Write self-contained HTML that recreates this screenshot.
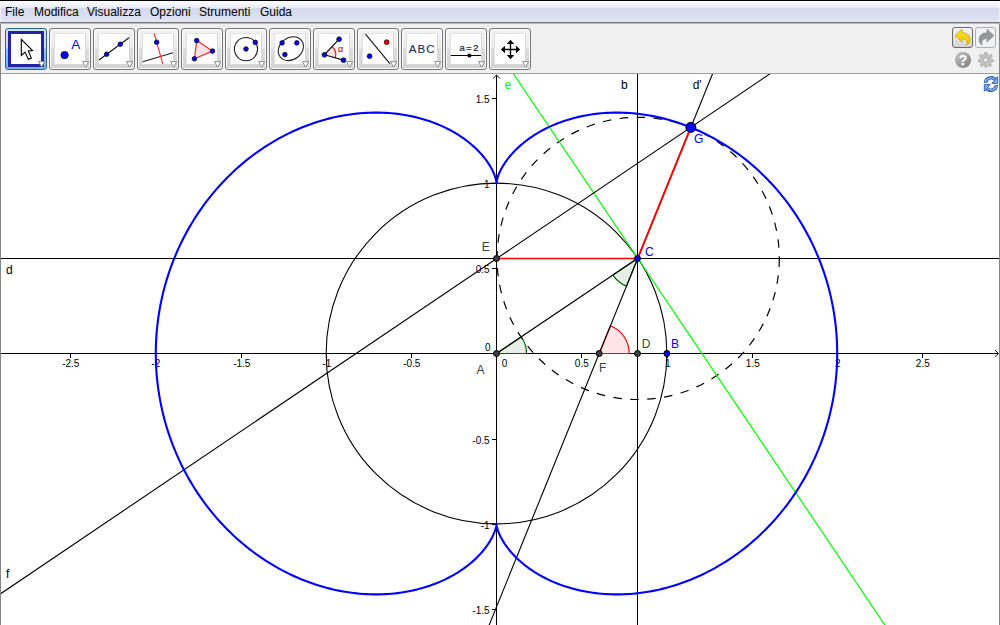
<!DOCTYPE html>
<html><head><meta charset="utf-8"><title>GeoGebra</title>
<style>
html,body{margin:0;padding:0;}
body{width:1000px;height:625px;overflow:hidden;background:#fff;position:relative;font-family:"Liberation Sans",sans-serif;}
#top{position:absolute;left:0;top:0;width:1000px;height:1px;background:#000;}
#menu{position:absolute;left:0;top:1px;width:1000px;height:21px;box-shadow:inset 1px 0 0 rgba(255,255,255,0.5),inset -1px 0 0 rgba(255,255,255,0.5);background:linear-gradient(#fdfdff 0px,#f1f3fb 4px,#e9ecf8 6.5px,#d5daee 7px,#d9ddf0 13px,#e1e5f5 20px);font-size:12px;color:#000;}
#menu span{position:absolute;top:4px;line-height:14px;}
#sep{position:absolute;left:0;top:22px;width:1000px;height:1px;background:#7c7c7c;box-shadow:0 1px 0 #b8b8b8;z-index:2;}
#tb{position:absolute;left:0;top:23px;width:1000px;height:50px;background:#f0f0f0;}
#tbb{position:absolute;left:0;top:73px;width:1000px;height:1px;background:#a0a0a0;}
#lb{position:absolute;left:0;top:22px;width:1px;height:603px;background:#868686;}
#rb{position:absolute;left:999px;top:22px;width:1px;height:603px;background:#868686;}
.btn{position:absolute;top:5px;width:40px;height:40px;border:1px solid #787878;border-radius:3px;background:linear-gradient(#f4f4f4 0,#ececec 19px,#dcdcdc 20px,#d2d2d2 40px);box-shadow:inset 0 0 0 1px #fafafa;}
.btn.sel{border-color:#2c628b;background:linear-gradient(#d3e3f0 0,#c6dcec 19px,#8ac8ea 20px,#6ab9e4 40px);box-shadow:none;}
.ic{position:absolute;left:4px;top:4px;width:30px;height:30px;background:#fff;border:1px solid #d6d6d6;border-top-color:#e2e2e2;border-left-color:#e0e0e0;}
.ic svg{display:block;margin:-1px 0 0 -1px;}
.sel .ic{left:2px;top:2px;width:30px;height:30px;border:3px solid #2222aa;}
.sel .ic svg{margin:-1px 0 0 -1px;}
.tri{position:absolute;left:32px;top:32px;}
#graph{position:absolute;left:0;top:0;}
</style></head><body>
<div id="top"></div>
<div id="menu"><span style="left:5px">File</span><span style="left:34px">Modifica</span><span style="left:87px">Visualizza</span><span style="left:150px">Opzioni</span><span style="left:199px">Strumenti</span><span style="left:260px">Guida</span></div>
<div id="sep"></div>
<div id="tb">
<div class="btn sel" style="left:5px"><div class="ic"><svg width="32" height="32" viewBox="0 0 32 32"><path d="M11.3 6.4 L11.3 22.5 L15 19.1 L18.3 26.2 L21.3 25.1 L18.3 18 L22.5 17.5 Z" fill="#fff" stroke="#000" stroke-width="1.1" stroke-linejoin="miter"/></svg></div><svg class="tri" width="8" height="7" viewBox="0 0 8 7"><path d="M0.4 0.6 L6.8 0.6 L3.6 6 Z" fill="#fff" stroke="#848484" stroke-width="0.9"/></svg></div>
<div class="btn" style="left:49px"><div class="ic"><svg width="32" height="32" viewBox="0 0 32 32"><circle cx="10.6" cy="22.1" r="3.7" fill="#0000ff" stroke="#101010" stroke-width="0.8"/><text x="17.3" y="16.4" font-size="13.5px" fill="#0000ff" font-family="Liberation Sans, sans-serif">A</text></svg></div><svg class="tri" width="8" height="7" viewBox="0 0 8 7"><path d="M0.4 0.6 L6.8 0.6 L3.6 6 Z" fill="#fff" stroke="#848484" stroke-width="0.9"/></svg></div>
<div class="btn" style="left:93px"><div class="ic"><svg width="32" height="32" viewBox="0 0 32 32"><line x1="1" y1="27" x2="31" y2="4.8" stroke="#101010" stroke-width="1.1"/><circle cx="8.7" cy="21.2" r="2.3" fill="#0000ff" stroke="#101010" stroke-width="0.8"/><circle cx="22.3" cy="11.2" r="2.3" fill="#0000ff" stroke="#101010" stroke-width="0.8"/></svg></div><svg class="tri" width="8" height="7" viewBox="0 0 8 7"><path d="M0.4 0.6 L6.8 0.6 L3.6 6 Z" fill="#fff" stroke="#848484" stroke-width="0.9"/></svg></div>
<div class="btn" style="left:137px"><div class="ic"><svg width="32" height="32" viewBox="0 0 32 32"><line x1="0.8" y1="28.8" x2="31" y2="19.7" stroke="#202020" stroke-width="1.1"/><line x1="12.2" y1="0.5" x2="20.8" y2="31" stroke="#ff3030" stroke-width="1.1"/><circle cx="14.7" cy="9.2" r="2.3" fill="#0000ff" stroke="#101010" stroke-width="0.8"/></svg></div><svg class="tri" width="8" height="7" viewBox="0 0 8 7"><path d="M0.4 0.6 L6.8 0.6 L3.6 6 Z" fill="#fff" stroke="#848484" stroke-width="0.9"/></svg></div>
<div class="btn" style="left:181px"><div class="ic"><svg width="32" height="32" viewBox="0 0 32 32"><path d="M10.7 7.6 L26.5 18.1 L8.4 25.8 Z" fill="#fbe1e1" stroke="#e03535" stroke-width="1.2" stroke-linejoin="round"/><circle cx="10.7" cy="7.6" r="2.3" fill="#0000ff" stroke="#101010" stroke-width="0.8"/><circle cx="26.5" cy="18.1" r="2.3" fill="#0000ff" stroke="#101010" stroke-width="0.8"/><circle cx="8.4" cy="25.8" r="2.3" fill="#0000ff" stroke="#101010" stroke-width="0.8"/></svg></div><svg class="tri" width="8" height="7" viewBox="0 0 8 7"><path d="M0.4 0.6 L6.8 0.6 L3.6 6 Z" fill="#fff" stroke="#848484" stroke-width="0.9"/></svg></div>
<div class="btn" style="left:225px"><div class="ic"><svg width="32" height="32" viewBox="0 0 32 32"><circle cx="16" cy="16.1" r="11.6" fill="none" stroke="#202020" stroke-width="1.1"/><circle cx="16" cy="16" r="2.3" fill="#0000ff" stroke="#101010" stroke-width="0.8"/><circle cx="25.3" cy="9.4" r="2.3" fill="#0000ff" stroke="#101010" stroke-width="0.8"/></svg></div><svg class="tri" width="8" height="7" viewBox="0 0 8 7"><path d="M0.4 0.6 L6.8 0.6 L3.6 6 Z" fill="#fff" stroke="#848484" stroke-width="0.9"/></svg></div>
<div class="btn" style="left:269px"><div class="ic"><svg width="32" height="32" viewBox="0 0 32 32"><ellipse cx="16.9" cy="15.8" rx="13.5" ry="10.9" transform="rotate(-38 16.7 15.8)" fill="none" stroke="#202020" stroke-width="1.1"/><circle cx="8.1" cy="9.9" r="2.3" fill="#0000ff" stroke="#101010" stroke-width="0.8"/><circle cx="22.8" cy="9.9" r="2.3" fill="#0000ff" stroke="#101010" stroke-width="0.8"/><circle cx="10.9" cy="21.6" r="2.3" fill="#0000ff" stroke="#101010" stroke-width="0.8"/></svg></div><svg class="tri" width="8" height="7" viewBox="0 0 8 7"><path d="M0.4 0.6 L6.8 0.6 L3.6 6 Z" fill="#fff" stroke="#848484" stroke-width="0.9"/></svg></div>
<div class="btn" style="left:313px"><div class="ic"><svg width="32" height="32" viewBox="0 0 32 32"><path d="M6.4 21.8 L14.2 13.5 A11.3 11.3 0 0 1 17.2 24.9 Z" fill="#fbe1e1" stroke="none"/><path d="M14.2 13.5 A11.3 11.3 0 0 1 17.2 24.9" fill="none" stroke="#e02020" stroke-width="1.2"/><path d="M21.1 6.2 L6.4 21.8 L25.5 27.2" fill="none" stroke="#101010" stroke-width="1.2"/><circle cx="6.4" cy="21.8" r="2.4" fill="#0000ff" stroke="#101010" stroke-width="0.8"/><circle cx="21.1" cy="6.2" r="2.4" fill="#0000ff" stroke="#101010" stroke-width="0.8"/><circle cx="25.5" cy="27.2" r="2.4" fill="#0000ff" stroke="#101010" stroke-width="0.8"/><text x="20" y="19.4" font-size="9px" fill="#e02020" stroke="#e02020" stroke-width="0.2" font-family="Liberation Sans, sans-serif">α</text></svg></div><svg class="tri" width="8" height="7" viewBox="0 0 8 7"><path d="M0.4 0.6 L6.8 0.6 L3.6 6 Z" fill="#fff" stroke="#848484" stroke-width="0.9"/></svg></div>
<div class="btn" style="left:357px"><div class="ic"><svg width="32" height="32" viewBox="0 0 32 32"><line x1="3.5" y1="1.1" x2="27.9" y2="30.7" stroke="#202020" stroke-width="1.2"/><circle cx="24.7" cy="9.2" r="2.4" fill="#ff0000" stroke="#101010" stroke-width="0.8"/><circle cx="7.6" cy="23.2" r="2.4" fill="#0000ff" stroke="#101010" stroke-width="0.8"/></svg></div><svg class="tri" width="8" height="7" viewBox="0 0 8 7"><path d="M0.4 0.6 L6.8 0.6 L3.6 6 Z" fill="#fff" stroke="#848484" stroke-width="0.9"/></svg></div>
<div class="btn" style="left:401px"><div class="ic"><svg width="32" height="32" viewBox="0 0 32 32"><text x="2.8" y="20" font-size="11.5px" letter-spacing="1.1" fill="#1c3564" stroke="#1c3564" stroke-width="0.15" font-family="Liberation Sans, sans-serif">ABC</text></svg></div><svg class="tri" width="8" height="7" viewBox="0 0 8 7"><path d="M0.4 0.6 L6.8 0.6 L3.6 6 Z" fill="#fff" stroke="#848484" stroke-width="0.9"/></svg></div>
<div class="btn" style="left:445px"><div class="ic"><svg width="32" height="32" viewBox="0 0 32 32"><text y="18.1" font-size="9.5px" fill="#1a1a40" stroke="#1a1a40" stroke-width="0.2" font-family="Liberation Sans, sans-serif"><tspan x="9.5">a</tspan><tspan x="16">=</tspan><tspan x="23.3">2</tspan></text><line x1="0.7" y1="22.5" x2="31" y2="22.5" stroke="#000" stroke-width="1"/><circle cx="19.4" cy="22.5" r="2.1" fill="#000"/></svg></div><svg class="tri" width="8" height="7" viewBox="0 0 8 7"><path d="M0.4 0.6 L6.8 0.6 L3.6 6 Z" fill="#fff" stroke="#848484" stroke-width="0.9"/></svg></div>
<div class="btn" style="left:489px"><div class="ic"><svg width="32" height="32" viewBox="0 0 32 32"><path d="M16.5 9 V24 M9 16.5 H24" stroke="#000" stroke-width="1.4" fill="none"/><path d="M16.5 6.8 L20.2 11 H12.8 Z M16.5 26.2 L20.2 22 H12.8 Z M6.8 16.5 L11 12.8 V20.2 Z M26.2 16.5 L22 12.8 V20.2 Z" fill="#000"/></svg></div><svg class="tri" width="8" height="7" viewBox="0 0 8 7"><path d="M0.4 0.6 L6.8 0.6 L3.6 6 Z" fill="#fff" stroke="#848484" stroke-width="0.9"/></svg></div>
<svg style="position:absolute;left:940px;top:0" width="60" height="50" viewBox="940 23 60 50" font-family="Liberation Sans, sans-serif">
<defs>
<linearGradient id="gb" x1="0" y1="0" x2="0" y2="1"><stop offset="0" stop-color="#f4f4f4"/><stop offset="1" stop-color="#d4d4d4"/></linearGradient>
<linearGradient id="gh" x1="0" y1="0" x2="1" y2="1"><stop offset="0" stop-color="#c4c4c4"/><stop offset="1" stop-color="#7c7c7c"/></linearGradient>
<linearGradient id="gy" x1="0" y1="0" x2="0" y2="1"><stop offset="0" stop-color="#ffe630"/><stop offset="1" stop-color="#e8c000"/></linearGradient>
</defs>
<rect x="952.5" y="27.5" width="20" height="20" rx="2.5" fill="url(#gb)" stroke="#6c6c6c"/>
<rect x="975.5" y="27.5" width="20" height="20" rx="2.5" fill="#f2f2f2" stroke="#a9b1b8"/>
<path d="M955 35.6 L962 29.2 L962 32.8 C967.6 32.8 970.4 36.2 969.9 40.4 C969.6 43.2 968.2 44.8 966.5 44.7 C967.7 42.4 967.2 38.8 962 38.6 L962 42.2 Z" fill="url(#gy)" stroke="#c9a400" stroke-width="0.8" stroke-linejoin="round"/>
<path d="M994 35.6 L987 29.2 L987 32.8 C981.4 32.8 978.6 36.2 979.1 40.4 C979.4 43.2 980.8 44.8 982.5 44.7 C981.3 42.4 981.8 38.8 987 38.6 L987 42.2 Z" fill="#979797" stroke="#8c8c8c" stroke-width="0.6" stroke-linejoin="round"/>
<circle cx="963" cy="60" r="8" fill="url(#gh)"/>
<text x="963" y="65.2" font-size="14px" font-weight="bold" fill="#fff" stroke="#fff" stroke-width="0.3" text-anchor="middle">?</text>
<g transform="translate(985.8 60) scale(0.93)" fill="#bcbcbc" stroke="#a2a2a2" stroke-width="0.5">
<path d="M-1.5 -8 H1.5 L2 -5.6 L3.6 -4.9 L5.7 -6.3 L7.4 -4.2 L5.6 -2.4 L6 -0.9 L8 -0.2 V1.8 L5.9 2.4 L5.2 3.9 L6.3 5.8 L4.4 7.3 L2.6 5.8 L1.2 6.2 L0.8 8 H-0.8 L-1.2 6.2 L-2.6 5.8 L-4.4 7.3 L-6.3 5.8 L-5.2 3.9 L-5.9 2.4 L-8 1.8 V-0.2 L-6 -0.9 L-5.6 -2.4 L-7.4 -4.2 L-5.7 -6.3 L-3.6 -4.9 L-2 -5.6 Z"/>
<circle r="4.6" fill="none" stroke="#c8c8c8" stroke-width="1.2"/><circle r="2.5" fill="#f0f0f0" stroke="#969696" stroke-width="0.7"/>
</g>
</svg>
</div>
<div id="tbb"></div>
<svg id="graph" width="1000" height="625" viewBox="0 0 1000 625" font-family="Liberation Sans, sans-serif">
<defs><clipPath id="cp"><rect x="1" y="74" width="998" height="551"/></clipPath></defs>
<g clip-path="url(#cp)">
<g stroke="#000" stroke-width="1" fill="none" shape-rendering="crispEdges">
<line x1="1" y1="353.5" x2="998" y2="353.5"/>
<line x1="496.5" y1="75" x2="496.5" y2="625"/>
<line x1="70.5" y1="353.5" x2="70.5" y2="358.0"/>
<line x1="155.5" y1="353.5" x2="155.5" y2="358.0"/>
<line x1="241.5" y1="353.5" x2="241.5" y2="358.0"/>
<line x1="326.5" y1="353.5" x2="326.5" y2="358.0"/>
<line x1="411.5" y1="353.5" x2="411.5" y2="358.0"/>
<line x1="581.5" y1="353.5" x2="581.5" y2="358.0"/>
<line x1="667.5" y1="353.5" x2="667.5" y2="358.0"/>
<line x1="752.5" y1="353.5" x2="752.5" y2="358.0"/>
<line x1="837.5" y1="353.5" x2="837.5" y2="358.0"/>
<line x1="922.5" y1="353.5" x2="922.5" y2="358.0"/>
<line x1="492.0" y1="609.5" x2="496.5" y2="609.5"/>
<line x1="492.0" y1="524.5" x2="496.5" y2="524.5"/>
<line x1="492.0" y1="439.5" x2="496.5" y2="439.5"/>
<line x1="492.0" y1="268.5" x2="496.5" y2="268.5"/>
<line x1="492.0" y1="183.5" x2="496.5" y2="183.5"/>
<line x1="492.0" y1="98.5" x2="496.5" y2="98.5"/>
</g>
<path d="M995 350.2 L998.4 353.5 L995 356.8" fill="none" stroke="#000" stroke-width="1"/>
<path d="M493.2 78.4 L496.5 75.1 L499.8 78.4" fill="none" stroke="#000" stroke-width="1"/>
<g font-size="10px" fill="#000" text-anchor="middle">
<text x="70.8" y="367">-2.5</text>
<text x="155.8" y="367">-2</text>
<text x="241.8" y="367">-1.5</text>
<text x="326.8" y="367">-1</text>
<text x="411.8" y="367">-0.5</text>
<text x="581.8" y="367">0.5</text>
<text x="667.8" y="367">1</text>
<text x="752.8" y="367">1.5</text>
<text x="837.8" y="367">2</text>
<text x="922.8" y="367">2.5</text>
</g>
<g font-size="10px" fill="#000" text-anchor="end">
<text x="489.6" y="613.5">-1.5</text>
<text x="489.6" y="528.5">-1</text>
<text x="489.6" y="443.5">-0.5</text>
<text x="489.6" y="272.5">0.5</text>
<text x="489.6" y="187.5">1</text>
<text x="489.6" y="102.5">1.5</text>
<text x="490.5" y="351">0</text>
</g>
<text x="501.7" y="367.3" font-size="10px">0</text>
<path d="M496.5 353.5 L526.5 353.5 A30 30 0 0 0 521.38 336.74 Z" fill="rgba(0,100,0,0.1)" stroke="#006400" stroke-width="1.2" stroke-linejoin="round"/>
<path d="M637.78 258.31 L612.9 275.08 A30 30 0 0 0 626.51 286.12 Z" fill="rgba(0,100,0,0.1)" stroke="#006400" stroke-width="1.2" stroke-linejoin="round"/>
<path d="M599.2 353.5 L629.2 353.5 A30 30 0 0 0 610.47 325.7 Z" fill="rgba(255,0,0,0.1)" stroke="#ff0000" stroke-width="1.2" stroke-linejoin="round"/>
<circle cx="496.5" cy="353.5" r="170.35" fill="none" stroke="#000" stroke-width="1.08"/>
<circle cx="638.2" cy="258.4" r="141.1" fill="none" stroke="#000" stroke-width="1.2" stroke-dasharray="8.5 8.5"/>
<line x1="-862.5" y1="258.5" x2="2137.5" y2="258.5" stroke="#000" stroke-width="1"/>
<line x1="637.5" y1="-1241.5" x2="637.5" y2="1758.5" stroke="#000" stroke-width="1"/>
<line x1="-200.37" y1="-985.67" x2="1475.92" y2="1502.3" stroke="#00ff00" stroke-width="1.2"/>
<line x1="74.43" y1="1648.51" x2="1201.12" y2="-1131.88" stroke="#000" stroke-width="1.12"/>
<line x1="-746.31" y1="1098.49" x2="1739.31" y2="-581.29" stroke="#000" stroke-width="1.12"/>
<line x1="496.5" y1="353.5" x2="637.78" y2="258.31" stroke="#000" stroke-width="1.12"/>
<path d="M837.2 353.5 L837.16 349.04 L837.04 344.58 L836.85 340.13 L836.58 335.68 L836.23 331.24 L835.8 326.8 L835.3 322.38 L834.72 317.97 L834.06 313.57 L833.33 309.18 L832.52 304.82 L831.63 300.47 L830.67 296.14 L829.64 291.84 L828.53 287.55 L827.35 283.29 L826.1 279.06 L824.77 274.86 L823.37 270.68 L821.91 266.54 L820.37 262.43 L818.76 258.35 L817.09 254.31 L815.35 250.31 L813.54 246.34 L811.67 242.42 L809.73 238.53 L807.73 234.69 L805.67 230.89 L803.55 227.14 L801.36 223.43 L799.12 219.77 L796.82 216.16 L794.46 212.6 L792.05 209.09 L789.58 205.63 L787.06 202.23 L784.49 198.88 L781.87 195.58 L779.2 192.34 L776.49 189.16 L773.72 186.04 L770.91 182.97 L768.06 179.97 L765.17 177.02 L762.24 174.14 L759.26 171.32 L756.25 168.56 L753.21 165.87 L750.13 163.24 L747.02 160.67 L743.87 158.17 L740.7 155.74 L737.5 153.37 L734.27 151.07 L731.02 148.83 L727.74 146.66 L724.44 144.56 L721.13 142.53 L717.79 140.56 L714.44 138.67 L711.07 136.84 L707.69 135.08 L704.29 133.38 L700.89 131.76 L697.48 130.2 L694.06 128.72 L690.63 127.3 L687.2 125.95 L683.77 124.66 L680.34 123.45 L676.9 122.3 L673.47 121.22 L670.05 120.2 L666.63 119.25 L663.21 118.37 L659.81 117.55 L656.41 116.8 L653.03 116.11 L649.66 115.49 L646.3 114.93 L642.96 114.43 L639.63 113.99 L636.33 113.61 L633.04 113.3 L629.78 113.04 L626.53 112.84 L623.32 112.7 L620.12 112.62 L616.96 112.59 L613.82 112.62 L610.71 112.7 L607.62 112.83 L604.57 113.02 L601.56 113.26 L598.57 113.54 L595.62 113.88 L592.71 114.26 L589.83 114.69 L586.98 115.17 L584.18 115.69 L581.42 116.25 L578.69 116.86 L576.01 117.5 L573.36 118.18 L570.76 118.9 L568.2 119.66 L565.69 120.46 L563.22 121.28 L560.79 122.14 L558.41 123.03 L556.07 123.95 L553.78 124.9 L551.54 125.87 L549.35 126.87 L547.2 127.9 L545.1 128.95 L543.05 130.01 L541.04 131.1 L539.09 132.21 L537.18 133.33 L535.32 134.47 L533.51 135.62 L531.75 136.79 L530.04 137.96 L528.38 139.15 L526.77 140.34 L525.2 141.54 L523.68 142.75 L522.22 143.96 L520.8 145.17 L519.43 146.39 L518.1 147.6 L516.82 148.81 L515.59 150.02 L514.41 151.23 L513.27 152.42 L512.18 153.62 L511.13 154.8 L510.13 155.97 L509.17 157.14 L508.26 158.29 L507.38 159.42 L506.55 160.55 L505.76 161.65 L505.01 162.74 L504.31 163.81 L503.63 164.87 L503 165.9 L502.41 166.91 L501.85 167.9 L501.32 168.86 L500.83 169.8 L500.38 170.72 L499.95 171.61 L499.56 172.47 L499.2 173.3 L498.87 174.1 L498.56 174.88 L498.28 175.62 L498.03 176.33 L497.8 177.01 L497.6 177.66 L497.42 178.27 L497.26 178.85 L497.12 179.4 L496.99 179.91 L496.89 180.38 L496.8 180.82 L496.73 181.22 L496.66 181.58 L496.62 181.91 L496.58 182.2 L496.55 182.45 L496.53 182.66 L496.51 182.84 L496.51 182.97 L496.5 183.07 L496.5 183.13 L496.5 183.15 L496.5 183.13 L496.5 183.07 L496.49 182.97 L496.49 182.84 L496.47 182.66 L496.45 182.45 L496.42 182.2 L496.38 181.91 L496.34 181.58 L496.27 181.22 L496.2 180.82 L496.11 180.38 L496.01 179.91 L495.88 179.4 L495.74 178.85 L495.58 178.27 L495.4 177.66 L495.2 177.01 L494.97 176.33 L494.72 175.62 L494.44 174.88 L494.13 174.1 L493.8 173.3 L493.44 172.47 L493.05 171.61 L492.62 170.72 L492.17 169.8 L491.68 168.86 L491.15 167.9 L490.59 166.91 L490 165.9 L489.37 164.87 L488.69 163.81 L487.99 162.74 L487.24 161.65 L486.45 160.55 L485.62 159.42 L484.74 158.29 L483.83 157.14 L482.87 155.97 L481.87 154.8 L480.82 153.62 L479.73 152.42 L478.59 151.23 L477.41 150.02 L476.18 148.81 L474.9 147.6 L473.57 146.39 L472.2 145.17 L470.78 143.96 L469.32 142.75 L467.8 141.54 L466.23 140.34 L464.62 139.15 L462.96 137.96 L461.25 136.79 L459.49 135.62 L457.68 134.47 L455.82 133.33 L453.91 132.21 L451.96 131.1 L449.95 130.01 L447.9 128.95 L445.8 127.9 L443.65 126.87 L441.46 125.87 L439.22 124.9 L436.93 123.95 L434.59 123.03 L432.21 122.14 L429.78 121.28 L427.31 120.46 L424.8 119.66 L422.24 118.9 L419.64 118.18 L416.99 117.5 L414.31 116.86 L411.58 116.25 L408.82 115.69 L406.02 115.17 L403.17 114.69 L400.29 114.26 L397.38 113.88 L394.43 113.54 L391.44 113.26 L388.43 113.02 L385.38 112.83 L382.29 112.7 L379.18 112.62 L376.04 112.59 L372.88 112.62 L369.68 112.7 L366.47 112.84 L363.22 113.04 L359.96 113.3 L356.67 113.61 L353.37 113.99 L350.04 114.43 L346.7 114.93 L343.34 115.49 L339.97 116.11 L336.59 116.8 L333.19 117.55 L329.79 118.37 L326.37 119.25 L322.95 120.2 L319.53 121.22 L316.1 122.3 L312.66 123.45 L309.23 124.66 L305.8 125.95 L302.37 127.3 L298.94 128.72 L295.52 130.2 L292.11 131.76 L288.71 133.38 L285.31 135.08 L281.93 136.84 L278.56 138.67 L275.21 140.56 L271.87 142.53 L268.56 144.56 L265.26 146.66 L261.98 148.83 L258.73 151.07 L255.5 153.37 L252.3 155.74 L249.13 158.17 L245.98 160.67 L242.87 163.24 L239.79 165.87 L236.75 168.56 L233.74 171.32 L230.76 174.14 L227.83 177.02 L224.94 179.97 L222.09 182.97 L219.28 186.04 L216.51 189.16 L213.8 192.34 L211.13 195.58 L208.51 198.88 L205.94 202.23 L203.42 205.63 L200.95 209.09 L198.54 212.6 L196.18 216.16 L193.88 219.77 L191.64 223.43 L189.45 227.14 L187.33 230.89 L185.27 234.69 L183.27 238.53 L181.33 242.42 L179.46 246.34 L177.65 250.31 L175.91 254.31 L174.24 258.35 L172.63 262.43 L171.09 266.54 L169.63 270.68 L168.23 274.86 L166.9 279.06 L165.65 283.29 L164.47 287.55 L163.36 291.84 L162.33 296.14 L161.37 300.47 L160.48 304.82 L159.67 309.18 L158.94 313.57 L158.28 317.97 L157.7 322.38 L157.2 326.8 L156.77 331.24 L156.42 335.68 L156.15 340.13 L155.96 344.58 L155.84 349.04 L155.8 353.5 L155.84 357.96 L155.96 362.42 L156.15 366.87 L156.42 371.32 L156.77 375.76 L157.2 380.2 L157.7 384.62 L158.28 389.03 L158.94 393.43 L159.67 397.82 L160.48 402.18 L161.37 406.53 L162.33 410.86 L163.36 415.16 L164.47 419.45 L165.65 423.71 L166.9 427.94 L168.23 432.14 L169.63 436.32 L171.09 440.46 L172.63 444.57 L174.24 448.65 L175.91 452.69 L177.65 456.69 L179.46 460.66 L181.33 464.58 L183.27 468.47 L185.27 472.31 L187.33 476.11 L189.45 479.86 L191.64 483.57 L193.88 487.23 L196.18 490.84 L198.54 494.4 L200.95 497.91 L203.42 501.37 L205.94 504.77 L208.51 508.12 L211.13 511.42 L213.8 514.66 L216.51 517.84 L219.28 520.96 L222.09 524.03 L224.94 527.03 L227.83 529.98 L230.76 532.86 L233.74 535.68 L236.75 538.44 L239.79 541.13 L242.87 543.76 L245.98 546.33 L249.13 548.83 L252.3 551.26 L255.5 553.63 L258.73 555.93 L261.98 558.17 L265.26 560.34 L268.56 562.44 L271.87 564.47 L275.21 566.44 L278.56 568.33 L281.93 570.16 L285.31 571.92 L288.71 573.62 L292.11 575.24 L295.52 576.8 L298.94 578.28 L302.37 579.7 L305.8 581.05 L309.23 582.34 L312.66 583.55 L316.1 584.7 L319.53 585.78 L322.95 586.8 L326.37 587.75 L329.79 588.63 L333.19 589.45 L336.59 590.2 L339.97 590.89 L343.34 591.51 L346.7 592.07 L350.04 592.57 L353.37 593.01 L356.67 593.39 L359.96 593.7 L363.22 593.96 L366.47 594.16 L369.68 594.3 L372.88 594.38 L376.04 594.41 L379.18 594.38 L382.29 594.3 L385.38 594.17 L388.43 593.98 L391.44 593.74 L394.43 593.46 L397.38 593.12 L400.29 592.74 L403.17 592.31 L406.02 591.83 L408.82 591.31 L411.58 590.75 L414.31 590.14 L416.99 589.5 L419.64 588.82 L422.24 588.1 L424.8 587.34 L427.31 586.54 L429.78 585.72 L432.21 584.86 L434.59 583.97 L436.93 583.05 L439.22 582.1 L441.46 581.13 L443.65 580.13 L445.8 579.1 L447.9 578.05 L449.95 576.99 L451.96 575.9 L453.91 574.79 L455.82 573.67 L457.68 572.53 L459.49 571.38 L461.25 570.21 L462.96 569.04 L464.62 567.85 L466.23 566.66 L467.8 565.46 L469.32 564.25 L470.78 563.04 L472.2 561.83 L473.57 560.61 L474.9 559.4 L476.18 558.19 L477.41 556.98 L478.59 555.77 L479.73 554.58 L480.82 553.38 L481.87 552.2 L482.87 551.03 L483.83 549.86 L484.74 548.71 L485.62 547.58 L486.45 546.45 L487.24 545.35 L487.99 544.26 L488.69 543.19 L489.37 542.13 L490 541.1 L490.59 540.09 L491.15 539.1 L491.68 538.14 L492.17 537.2 L492.62 536.28 L493.05 535.39 L493.44 534.53 L493.8 533.7 L494.13 532.9 L494.44 532.12 L494.72 531.38 L494.97 530.67 L495.2 529.99 L495.4 529.34 L495.58 528.73 L495.74 528.15 L495.88 527.6 L496.01 527.09 L496.11 526.62 L496.2 526.18 L496.27 525.78 L496.34 525.42 L496.38 525.09 L496.42 524.8 L496.45 524.55 L496.47 524.34 L496.49 524.16 L496.49 524.03 L496.5 523.93 L496.5 523.87 L496.5 523.85 L496.5 523.87 L496.5 523.93 L496.51 524.03 L496.51 524.16 L496.53 524.34 L496.55 524.55 L496.58 524.8 L496.62 525.09 L496.66 525.42 L496.73 525.78 L496.8 526.18 L496.89 526.62 L496.99 527.09 L497.12 527.6 L497.26 528.15 L497.42 528.73 L497.6 529.34 L497.8 529.99 L498.03 530.67 L498.28 531.38 L498.56 532.12 L498.87 532.9 L499.2 533.7 L499.56 534.53 L499.95 535.39 L500.38 536.28 L500.83 537.2 L501.32 538.14 L501.85 539.1 L502.41 540.09 L503 541.1 L503.63 542.13 L504.31 543.19 L505.01 544.26 L505.76 545.35 L506.55 546.45 L507.38 547.58 L508.26 548.71 L509.17 549.86 L510.13 551.03 L511.13 552.2 L512.18 553.38 L513.27 554.58 L514.41 555.77 L515.59 556.98 L516.82 558.19 L518.1 559.4 L519.43 560.61 L520.8 561.83 L522.22 563.04 L523.68 564.25 L525.2 565.46 L526.77 566.66 L528.38 567.85 L530.04 569.04 L531.75 570.21 L533.51 571.38 L535.32 572.53 L537.18 573.67 L539.09 574.79 L541.04 575.9 L543.05 576.99 L545.1 578.05 L547.2 579.1 L549.35 580.13 L551.54 581.13 L553.78 582.1 L556.07 583.05 L558.41 583.97 L560.79 584.86 L563.22 585.72 L565.69 586.54 L568.2 587.34 L570.76 588.1 L573.36 588.82 L576.01 589.5 L578.69 590.14 L581.42 590.75 L584.18 591.31 L586.98 591.83 L589.83 592.31 L592.71 592.74 L595.62 593.12 L598.57 593.46 L601.56 593.74 L604.57 593.98 L607.62 594.17 L610.71 594.3 L613.82 594.38 L616.96 594.41 L620.12 594.38 L623.32 594.3 L626.53 594.16 L629.78 593.96 L633.04 593.7 L636.33 593.39 L639.63 593.01 L642.96 592.57 L646.3 592.07 L649.66 591.51 L653.03 590.89 L656.41 590.2 L659.81 589.45 L663.21 588.63 L666.63 587.75 L670.05 586.8 L673.47 585.78 L676.9 584.7 L680.34 583.55 L683.77 582.34 L687.2 581.05 L690.63 579.7 L694.06 578.28 L697.48 576.8 L700.89 575.24 L704.29 573.62 L707.69 571.92 L711.07 570.16 L714.44 568.33 L717.79 566.44 L721.13 564.47 L724.44 562.44 L727.74 560.34 L731.02 558.17 L734.27 555.93 L737.5 553.63 L740.7 551.26 L743.87 548.83 L747.02 546.33 L750.13 543.76 L753.21 541.13 L756.25 538.44 L759.26 535.68 L762.24 532.86 L765.17 529.98 L768.06 527.03 L770.91 524.03 L773.72 520.96 L776.49 517.84 L779.2 514.66 L781.87 511.42 L784.49 508.12 L787.06 504.77 L789.58 501.37 L792.05 497.91 L794.46 494.4 L796.82 490.84 L799.12 487.23 L801.36 483.57 L803.55 479.86 L805.67 476.11 L807.73 472.31 L809.73 468.47 L811.67 464.58 L813.54 460.66 L815.35 456.69 L817.09 452.69 L818.76 448.65 L820.37 444.57 L821.91 440.46 L823.37 436.32 L824.77 432.14 L826.1 427.94 L827.35 423.71 L828.53 419.45 L829.64 415.16 L830.67 410.86 L831.63 406.53 L832.52 402.18 L833.33 397.82 L834.06 393.43 L834.72 389.03 L835.3 384.62 L835.8 380.2 L836.23 375.76 L836.58 371.32 L836.85 366.87 L837.04 362.42 L837.16 357.96 L837.2 353.5" fill="none" stroke="#0000ff" stroke-width="2.1" stroke-linejoin="round"/>
<line x1="496.5" y1="258.5" x2="637.5" y2="258.5" stroke="#ff0000" stroke-width="1.7"/>
<line x1="637.78" y1="258.31" x2="690.83" y2="127.38" stroke="#ff0000" stroke-width="1.9"/>
<circle cx="496.5" cy="353.5" r="3" fill="#404040" stroke="#000" stroke-width="1"/>
<circle cx="496.5" cy="258.5" r="3" fill="#404040" stroke="#000" stroke-width="1"/>
<circle cx="637.5" cy="353.5" r="3" fill="#404040" stroke="#000" stroke-width="1"/>
<circle cx="599.2" cy="353.5" r="3" fill="#404040" stroke="#000" stroke-width="1"/>
<circle cx="666.85" cy="353.5" r="3" fill="#0000ff" stroke="#000" stroke-width="1"/>
<circle cx="637.5" cy="258.5" r="3" fill="#0000ff" stroke="#000" stroke-width="1"/>
<circle cx="690.83" cy="127.38" r="5" fill="#0000ff" stroke="#000" stroke-width="1"/>
<g font-size="12px">
<text x="476.5" y="374" fill="#404040">A</text>
<text x="671" y="348" fill="#0000ff">B</text>
<text x="645" y="256" fill="#0000ff">C</text>
<text x="641.8" y="348" fill="#404040">D</text>
<text x="481.8" y="251" fill="#404040">E</text>
<text x="599" y="372" fill="#404040">F</text>
<text x="694" y="143" fill="#0000ff">G</text>
<text x="621" y="89" fill="#000">b</text>
<text x="6" y="274" fill="#000">d</text>
<text x="692.7" y="89" fill="#000">d'</text>
<text x="504.4" y="89" fill="#00ff00">e</text>
<text x="6" y="578" fill="#000">f</text>
</g>
</g>
<g fill="none" stroke-linecap="butt">
<path d="M985.6 83 C985.8 77.6 992.5 75.6 996.2 80.6" stroke="#2b5fae" stroke-width="3.4"/>
<path d="M985.6 82.6 C986 78 992.3 76 996 80.6" stroke="#9dc0ea" stroke-width="1.3"/>
<path d="M996.4 85 C996.2 90.4 989.5 92.4 985.8 87.4" stroke="#2b5fae" stroke-width="3.4"/>
<path d="M996.4 85.4 C996 90 989.7 92 986 87.4" stroke="#9dc0ea" stroke-width="1.3"/>
</g>
<path d="M997.7 76.6 L997.7 83.4 L991.8 83.4 Z" fill="#7faee4" stroke="#2b5fae" stroke-width="0.9" stroke-linejoin="round"/>
<path d="M984.3 91.4 L984.3 84.6 L990.2 84.6 Z" fill="#7faee4" stroke="#2b5fae" stroke-width="0.9" stroke-linejoin="round"/>
</svg>
<div id="lb"></div><div id="rb"></div>
</body></html>
